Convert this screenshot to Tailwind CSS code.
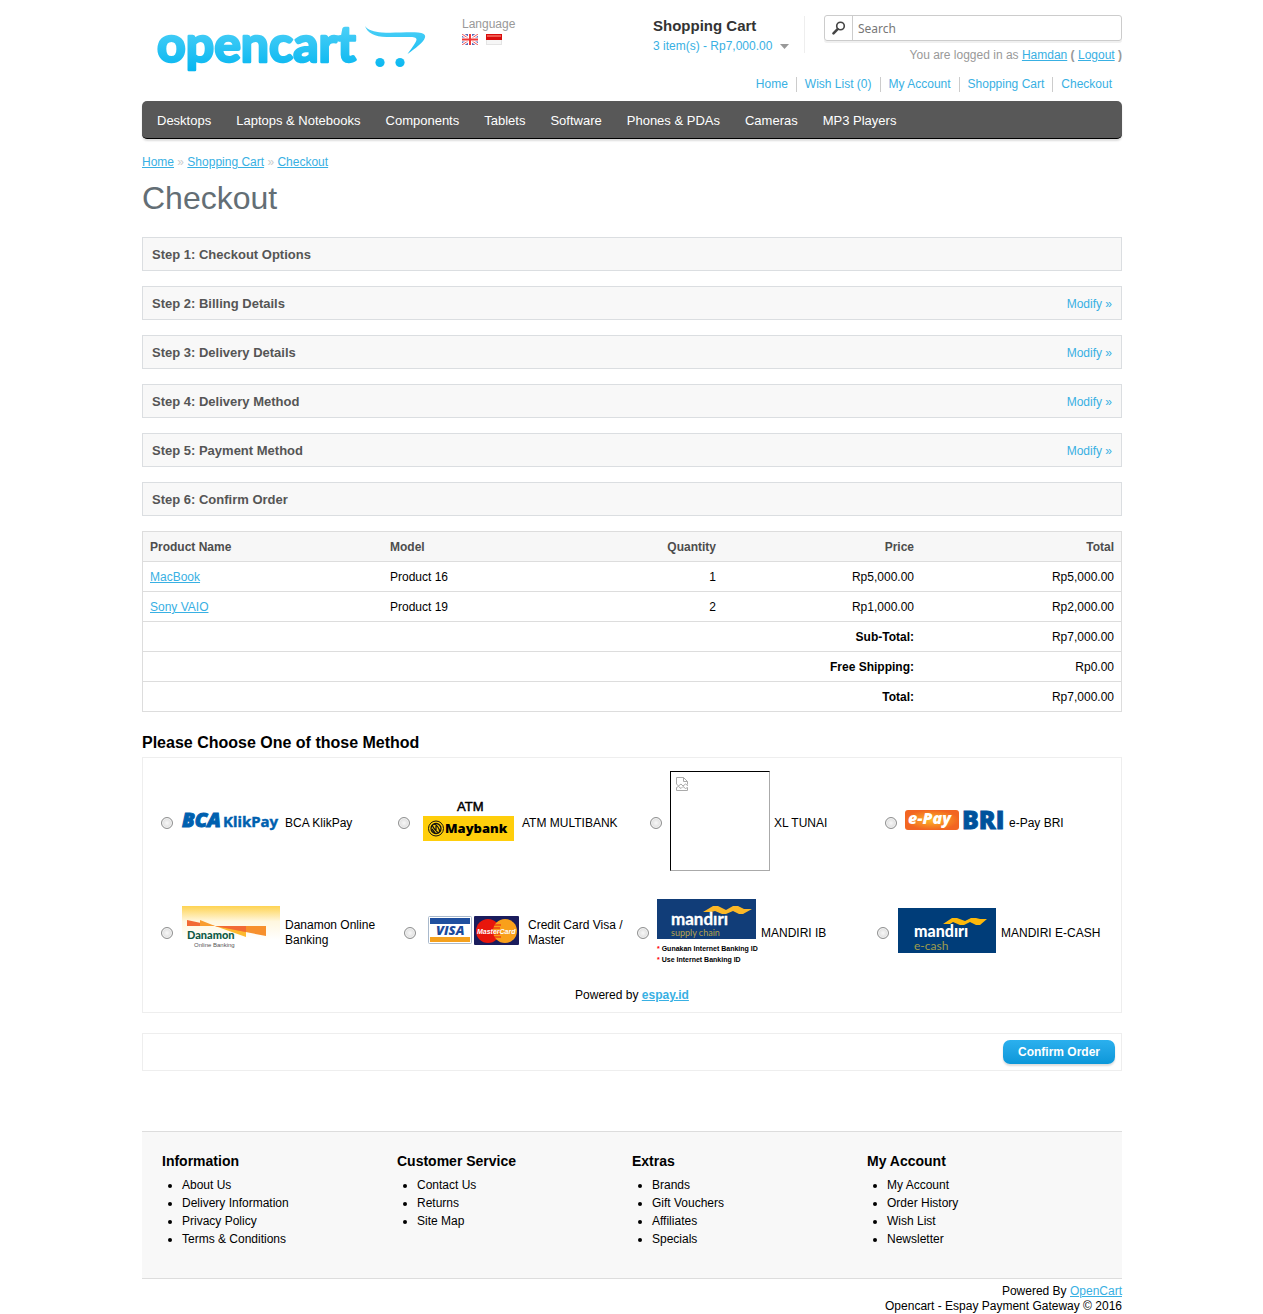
<!DOCTYPE html>
<html lang="en">
<head>
<meta charset="utf-8">
<meta name="viewport" content="width=device-width, initial-scale=1">
<title>Checkout</title>
<script src="https://cdn.jsdelivr.net/npm/@tailwindcss/browser@4"></script>
</head>
<body class="bg-white text-black text-xs leading-[15px] font-['Liberation_Sans',Arial,sans-serif]">
<div class="max-w-[981px] mx-auto pl-px">

  <header class="pb-[9px]">
    <div class="flex h-[77px] pt-[15px]">
      <a href="#" class="w-[320px] shrink-0 pl-[15px]" aria-label="opencart">
        <svg class="overflow-visible" width="270" height="61" viewBox="157 15 270 61">
          <defs>
            <linearGradient id="logo" gradientUnits="userSpaceOnUse" x1="0" y1="26" x2="0" y2="74">
              <stop offset="0" stop-color="#4dd0f7"/><stop offset="1" stop-color="#00b4f0"/>
            </linearGradient>
          </defs>
          <g fill="url(#logo)">
            <text x="157" y="62" font-family="Lato, sans-serif" font-weight="700" font-size="50" stroke="url(#logo)" stroke-width="2.500" stroke-linejoin="round">opencart</text>
            <path d="M365 26c3 4 9 6 17 6.500 11 .8 25-.6 36 0 5 .3 8 2 7 5-1.500 5-10 11-17.500 16.500 5-7 9-12 9-14.500 0-2-3-2.500-7-2.500h-23c-12-.3-19-4-21.500-11z"/>
            <circle cx="380" cy="62.500" r="4.600"/>
            <circle cx="400" cy="62.500" r="4.600"/>
          </g>
        </svg>
      </a>
      <div class="w-[191px] shrink-0 text-[#999] pt-[2px]">
        Language
        <div class="flex gap-2 pt-[2px]">
          <button type="button" aria-label="English">
            <svg width="16" height="11" viewBox="0 0 16 11">
              <rect width="16" height="11" fill="#5b68b8"/>
              <path d="M0 0l16 11M16 0L0 11" stroke="#fff" stroke-width="3"/>
              <path d="M0 0l16 11M16 0L0 11" stroke="#f0555a" stroke-width="1"/>
              <path d="M8 0v11M0 5.500h16" stroke="#fff" stroke-width="4"/>
              <path d="M8 0v11M0 5.500h16" stroke="#f03838" stroke-width="2"/>
            </svg>
          </button>
          <button type="button" aria-label="Indonesian">
            <svg width="16" height="11" viewBox="0 0 16 11">
              <rect width="16" height="11" fill="#e4e4e4"/><rect x="1" y="5" width="14" height="5" fill="#f6f6f6"/>
              <rect width="16" height="6" fill="#d80d0d"/><rect x="1" y="1" width="14" height="2" fill="#f05a50"/>
            </svg>
          </button>
        </div>
      </div>
      <div class="w-[152px] shrink-0 h-[37px] mt-[1px] pt-[1px] border-r border-[#eee]">
        <h4 class="text-[15px] leading-[17px] font-bold text-[#333]">Shopping Cart</h4>
        <a href="#" class="flex items-center gap-2 pt-[5px] text-[#38b0e3]">3 item(s) - Rp7,000.00
          <svg width="9" height="5" viewBox="0 0 9 5"><path d="M0 0h9L4.500 5z" fill="#999"/></svg>
        </a>
      </div>
      <div class="flex-1 pl-[19px]">
        <div class="flex h-[26px] rounded-[3px] border border-[#ccc] shadow-[0_2px_0_#f0f0f0]">
          <button type="button" aria-label="Search" class="w-[28px] shrink-0 border-r border-[#ccc] flex items-center justify-center">
            <svg width="14" height="14" viewBox="0 0 14 14" fill="none" stroke="#444"><circle cx="8.500" cy="5" r="3.800" stroke-width="1.600"/><path d="M5.600 8.200L1.500 12.300" stroke-width="2.600" stroke-linecap="round"/></svg>
          </button>
          <input type="text" placeholder="Search" aria-label="Search" class="flex-1 min-w-0 px-[5px] outline-none font-['Noto_Sans',sans-serif] placeholder:text-[#777]">
        </div>
        <div class="pt-[7px] text-right text-[#999]">You are logged in as <a href="#" class="text-[#38b0e3] underline">Hamdan</a> <b class="font-bold">(</b> <a href="#" class="text-[#38b0e3] underline">Logout</a> <b class="font-bold">)</b></div>
      </div>
    </div>
    <nav class="flex justify-end text-[#38b0e3] pr-[2px]">
      <a href="#" class="px-2 border-r border-[#ccc]">Home</a>
      <a href="#" class="px-2 border-r border-[#ccc]">Wish List (0)</a>
      <a href="#" class="px-2 border-r border-[#ccc]">My Account</a>
      <a href="#" class="px-2 border-r border-[#ccc]">Shopping Cart</a>
      <a href="#" class="px-2">Checkout</a>
    </nav>
  </header>

  <nav class="flex items-center gap-[25px] h-[38px] pt-[2px] pl-[15px] rounded-[5px] bg-[#585858] border-b border-black shadow-[0_2px_2px_#ddd] text-[13px] text-white">
    <a href="#">Desktops</a>
    <a href="#">Laptops &amp; Notebooks</a>
    <a href="#">Components</a>
    <a href="#">Tablets</a>
    <a href="#">Software</a>
    <a href="#">Phones &amp; PDAs</a>
    <a href="#">Cameras</a>
    <a href="#">MP3 Players</a>
  </nav>

  <main>
    <div class="pt-4 text-[#ccc]"><a href="#" class="text-[#38b0e3] underline">Home</a> » <a href="#" class="text-[#38b0e3] underline">Shopping Cart</a> » <a href="#" class="text-[#38b0e3] underline">Checkout</a></div>
    <h1 class="pt-[10px] pb-[21px] text-[32px] leading-[36px] text-[#636e75]">Checkout</h1>

    <div class="flex flex-col gap-[15px] pb-[15px] text-[13px] font-bold text-[#555] [&_a]:pt-[2px]">
      <div class="flex items-center justify-between h-[34px] px-[9px] border border-[#dbdee1] bg-[#f8f8f8]"><h2>Step 1: Checkout Options</h2></div>
      <div class="flex items-center justify-between h-[34px] px-[9px] border border-[#dbdee1] bg-[#f8f8f8]"><h2>Step 2: Billing Details</h2><a href="#" class="text-xs font-normal text-[#38b0e3]">Modify »</a></div>
      <div class="flex items-center justify-between h-[34px] px-[9px] border border-[#dbdee1] bg-[#f8f8f8]"><h2>Step 3: Delivery Details</h2><a href="#" class="text-xs font-normal text-[#38b0e3]">Modify »</a></div>
      <div class="flex items-center justify-between h-[34px] px-[9px] border border-[#dbdee1] bg-[#f8f8f8]"><h2>Step 4: Delivery Method</h2><a href="#" class="text-xs font-normal text-[#38b0e3]">Modify »</a></div>
      <div class="flex items-center justify-between h-[34px] px-[9px] border border-[#dbdee1] bg-[#f8f8f8]"><h2>Step 5: Payment Method</h2><a href="#" class="text-xs font-normal text-[#38b0e3]">Modify »</a></div>
      <div class="flex items-center justify-between h-[34px] px-[9px] border border-[#dbdee1] bg-[#f8f8f8]"><h2>Step 6: Confirm Order</h2></div>
    </div>

    <table class="w-full border-separate border-spacing-0 border-t border-l border-r border-[#ddd] [&_td]:border-b [&_td]:border-[#ddd] [&_td]:px-[7px] [&_td]:pt-2 [&_td]:pb-[6px] [&_th]:border-b [&_th]:border-[#ddd] [&_th]:px-[7px] [&_th]:pt-2 [&_th]:pb-[6px] [&_th]:text-[#4d4d4d]">
      <thead>
        <tr class="bg-[#f7f7f7]">
          <th class="w-[240px] text-left">Product Name</th>
          <th class="text-left">Model</th>
          <th class="w-[142px] text-right">Quantity</th>
          <th class="w-[198px] text-right">Price</th>
          <th class="w-[200px] text-right">Total</th>
        </tr>
      </thead>
      <tbody>
        <tr><td><a href="#" class="text-[#38b0e3] underline">MacBook</a></td><td>Product 16</td><td class="text-right">1</td><td class="text-right">Rp5,000.00</td><td class="text-right">Rp5,000.00</td></tr>
        <tr><td><a href="#" class="text-[#38b0e3] underline">Sony VAIO</a></td><td>Product 19</td><td class="text-right">2</td><td class="text-right">Rp1,000.00</td><td class="text-right">Rp2,000.00</td></tr>
      </tbody>
      <tfoot>
        <tr><td colspan="4" class="text-right font-bold">Sub-Total:</td><td class="text-right">Rp7,000.00</td></tr>
        <tr><td colspan="4" class="text-right font-bold">Free Shipping:</td><td class="text-right">Rp0.00</td></tr>
        <tr><td colspan="4" class="text-right font-bold">Total:</td><td class="text-right">Rp7,000.00</td></tr>
      </tfoot>
    </table>

    <h3 class="pt-[19px] pb-[2px] text-base leading-6 font-bold">Please Choose One of those Method</h3>
    <section class="border border-[#eee] pt-[13px] pb-[9px]">
      <div class="grid grid-cols-[237fr_252fr_235fr_236fr] pl-[18px]">
        <label class="flex items-center">
          <input type="radio" name="method" class="appearance-none shrink-0 size-3 mt-1 mr-2 rounded-full border border-[#8e8f8f] bg-radial from-[#f4f4f4] from-10% to-[#d2d2d2] shadow-[inset_0_0_0_1px_#f4f4f4]">
          <svg class="shrink-0 mr-1" width="100" height="100" viewBox="181 771 100 100">
            <g fill="#0060af">
              <text x="182" y="827" font-family="Open Sans, sans-serif" font-weight="800" font-style="italic" font-size="20" stroke="#0060af" stroke-width="1">BCA</text>
              <text x="223" y="827" font-family="Noto Sans, sans-serif" font-weight="700" font-size="15" stroke="#0060af" stroke-width=".4">KlikPay</text>
            </g>
          </svg>
          <span class="mt-1">BCA KlikPay</span>
        </label>
        <label class="flex items-center">
          <input type="radio" name="method" class="appearance-none shrink-0 size-3 mt-1 mr-2 rounded-full border border-[#8e8f8f] bg-radial from-[#f4f4f4] from-10% to-[#d2d2d2] shadow-[inset_0_0_0_1px_#f4f4f4]">
          <svg class="shrink-0 mr-1" width="100" height="100" viewBox="418 771 100 100">
            <text x="457" y="811" font-family="Liberation Sans, sans-serif" font-size="13" stroke="#000" stroke-width=".5">ATM</text>
            <rect x="423" y="816" width="91" height="25" fill="#ffce0b"/>
            <g fill="none" stroke="#111"><circle cx="436" cy="828.500" r="7.500" stroke-width="1"/><circle cx="436" cy="828.500" r="5" stroke-width="1.300"/><path d="M432 825c2 4 3 6 7 8M434 824c3 1 5 4 6 8M436 831v-5M432 829l3 4" stroke-width="1.300"/></g>
            <text x="445" y="833" font-family="Open Sans, sans-serif" font-weight="800" font-size="13">Maybank</text>
          </svg>
          <span class="mt-1">ATM MULTIBANK</span>
        </label>
        <label class="flex items-center">
          <input type="radio" name="method" class="appearance-none shrink-0 size-3 mt-1 mr-2 rounded-full border border-[#8e8f8f] bg-radial from-[#f4f4f4] from-10% to-[#d2d2d2] shadow-[inset_0_0_0_1px_#f4f4f4]">
          <span class="shrink-0 mr-1 size-[100px] p-[5px] border border-t-black border-l-black border-b-[#aaa] border-r-[#aaa]">
            <svg width="12" height="14" viewBox="0 0 12 14" fill="none" stroke="#aaa"><path d="M.500 7v-6.500h7l4 4v3M7.500.500v4h4M.500 7l2 2 2.500-2 2 2 2.500-2 3 2M.500 13.500v-3l2-1 2.500 2 2-2 2.500 2 2-1v3z"/></svg>
          </span>
          <span class="mt-1">XL TUNAI</span>
        </label>
        <label class="flex items-center">
          <input type="radio" name="method" class="appearance-none shrink-0 size-3 mt-1 mr-2 rounded-full border border-[#8e8f8f] bg-radial from-[#f4f4f4] from-10% to-[#d2d2d2] shadow-[inset_0_0_0_1px_#f4f4f4]">
          <svg class="shrink-0 mr-1" width="100" height="100" viewBox="905 771 100 100">
            <defs><radialGradient id="epay"><stop offset="0" stop-color="#fdb827"/><stop offset="1" stop-color="#f26522"/></radialGradient></defs>
            <rect x="905" y="810" width="54" height="20" rx="3" fill="url(#epay)"/>
            <text x="908" y="824" font-family="Open Sans, sans-serif" font-style="italic" font-weight="800" font-size="16" fill="#fff">e-Pay</text>
            <text x="962" y="829" font-family="Open Sans, sans-serif" font-weight="800" font-size="25" fill="#00529c" stroke="#00529c" stroke-width=".8">BRI</text>
          </svg>
          <span class="mt-1">e-Pay BRI</span>
        </label>
      </div>

      <div class="grid grid-cols-[243fr_233fr_240fr_244fr] pl-[18px] pt-[27px]">
        <label class="flex items-center">
          <input type="radio" name="method" class="appearance-none shrink-0 size-3 mr-2 rounded-full border border-[#8e8f8f] bg-radial from-[#f4f4f4] from-10% to-[#d2d2d2] shadow-[inset_0_0_0_1px_#f4f4f4]">
          <svg class="shrink-0 mr-1" width="100" height="70" viewBox="181 898 100 70">
            <defs><linearGradient id="sun" x1="0" y1="0" x2="0" y2="1"><stop offset="0" stop-color="#fed352"/><stop offset=".45" stop-color="#fff7df"/><stop offset="1" stop-color="#fff"/></linearGradient></defs>
            <rect x="182" y="906" width="98" height="34" fill="url(#sun)"/>
            <path d="M187 920l28 6h-28z" fill="#f26a35"/>
            <path d="M200 920l15 6h-15z" fill="#f99d2f"/>
            <path d="M215 926h31v11z" fill="#fdb92e"/>
            <path d="M215 926h51v10z" fill="#f7902d"/>
            <path d="M215 926h31v6z" fill="#f26a35"/>
            <text x="187" y="939" font-family="Lato, sans-serif" font-weight="900" font-size="11" fill="#0d5a45">Danamon</text>
            <text x="194" y="947" font-family="Liberation Sans, sans-serif" font-size="6" fill="#555">Online Banking</text>
          </svg>
          <span class="w-[100px]">Danamon Online Banking</span>
        </label>
        <label class="flex items-center">
          <input type="radio" name="method" class="appearance-none shrink-0 size-3 mr-2 rounded-full border border-[#8e8f8f] bg-radial from-[#f4f4f4] from-10% to-[#d2d2d2] shadow-[inset_0_0_0_1px_#f4f4f4]">
          <svg class="shrink-0 mr-1" width="100" height="70" viewBox="424 898 100 70">
            <rect x="428.500" y="916.500" width="43" height="27" rx="1" fill="#fff" stroke="#a9b9cc"/>
            <rect x="430" y="918" width="40" height="6" fill="#1f4f9f"/><rect x="430" y="937" width="40" height="5" fill="#f5a11d"/>
            <text x="436" y="935" font-family="Open Sans, sans-serif" font-style="italic" font-weight="800" font-size="13" fill="#1b4a9c">VISA</text>
            <rect x="474" y="916" width="45" height="29" rx="1" fill="#1a1c5c"/>
            <circle cx="488" cy="931" r="12" fill="#e8160c"/><circle cx="505" cy="931" r="12" fill="#f9a01b"/>
            <path d="M493 925h8M492 928h8M492 931h9M492 934h8M493 937h8" stroke="#e8160c"/>
            <text x="477" y="934" font-family="Liberation Sans, sans-serif" font-style="italic" font-weight="700" font-size="7" fill="#fff">MasterCard</text>
          </svg>
          <span class="w-[100px]">Credit Card Visa / Master</span>
        </label>
        <label class="flex items-center">
          <input type="radio" name="method" class="appearance-none shrink-0 size-3 mr-2 rounded-full border border-[#8e8f8f] bg-radial from-[#f4f4f4] from-10% to-[#d2d2d2] shadow-[inset_0_0_0_1px_#f4f4f4]">
          <svg class="shrink-0 mr-1 overflow-visible" width="100" height="70" viewBox="657 898 100 70">
            <rect x="657" y="899" width="99" height="40" fill="#113d78"/>
            <path d="M703 912l10-6h5l8 4 7-4h5l6 3h8l-9 5h-4l-6-3-7 3h-4l-7-3-4 1z" fill="#fcb827"/>
            <text x="671" y="925" font-family="Lato, sans-serif" font-weight="700" font-size="17" fill="#fff" stroke="#fff" stroke-width=".3">mandırı</text>
            <text x="671" y="936" font-family="Lato, sans-serif" font-size="9" fill="#b5a34b">supply chain</text>
            <g font-family="Liberation Sans, sans-serif" font-weight="700" font-size="7"><text x="657" y="951"><tspan fill="red">*</tspan> Gunakan Internet Banking ID</text><text x="657" y="962"><tspan fill="red">*</tspan> Use Internet Banking ID</text></g>
          </svg>
          <span>MANDIRI IB</span>
        </label>
        <label class="flex items-center">
          <input type="radio" name="method" class="appearance-none shrink-0 size-3 mr-2 rounded-full border border-[#8e8f8f] bg-radial from-[#f4f4f4] from-10% to-[#d2d2d2] shadow-[inset_0_0_0_1px_#f4f4f4]">
          <svg class="shrink-0 mr-1" width="100" height="70" viewBox="897 898 100 70">
            <rect x="898" y="908" width="98" height="45" fill="#003d79"/>
            <path d="M943 924l9-6h5l8 3 6-3h5l4 1h7l-7 6h-4l-6-3-6 3h-4l-7-3-3 2z" fill="#fcb80b"/>
            <text x="914" y="937" font-family="Lato, sans-serif" font-weight="900" font-size="16" fill="#fff">mandırı</text>
            <text x="914" y="950" font-family="Lato, sans-serif" font-size="12" fill="#9f9c4c">e-cash</text>
          </svg>
          <span>MANDIRI E-CASH</span>
        </label>
      </div>
      <p class="pt-5 text-center">Powered by <a href="#" class="font-bold text-[#38b0e3] underline">espay.id</a></p>
    </section>

    <div class="flex justify-end mt-5 p-[6px] h-[38px] border border-[#eee]">
      <button type="button" class="h-6 px-[15px] rounded-[7px] bg-linear-to-b from-[#2bb0ee] to-[#0a97d9] shadow-[0_2px_2px_#ddd] font-bold text-white">Confirm Order</button>
    </div>
  </main>

  <footer class="mt-[60px]">
    <div class="grid grid-cols-4 h-[148px] pl-5 pt-5 pr-5 border-y border-[#ddd] bg-[#f8f8f8] [&_h3]:text-sm [&_h3]:leading-[18px] [&_h3]:font-bold [&_ul]:list-disc [&_ul]:pl-5 [&_ul]:pt-[6px] [&_ul]:leading-[18px]">
      <div>
        <h3>Information</h3>
        <ul><li><a href="#">About Us</a></li><li><a href="#">Delivery Information</a></li><li><a href="#">Privacy Policy</a></li><li><a href="#">Terms &amp; Conditions</a></li></ul>
      </div>
      <div>
        <h3>Customer Service</h3>
        <ul><li><a href="#">Contact Us</a></li><li><a href="#">Returns</a></li><li><a href="#">Site Map</a></li></ul>
      </div>
      <div>
        <h3>Extras</h3>
        <ul><li><a href="#">Brands</a></li><li><a href="#">Gift Vouchers</a></li><li><a href="#">Affiliates</a></li><li><a href="#">Specials</a></li></ul>
      </div>
      <div>
        <h3>My Account</h3>
        <ul><li><a href="#">My Account</a></li><li><a href="#">Order History</a></li><li><a href="#">Wish List</a></li><li><a href="#">Newsletter</a></li></ul>
      </div>
    </div>
    <p class="pt-[5px] text-right">Powered By <a href="#" class="text-[#38b0e3] underline">OpenCart</a><br>Opencart - Espay Payment Gateway © 2016</p>
  </footer>
</div>
</body>
</html>
